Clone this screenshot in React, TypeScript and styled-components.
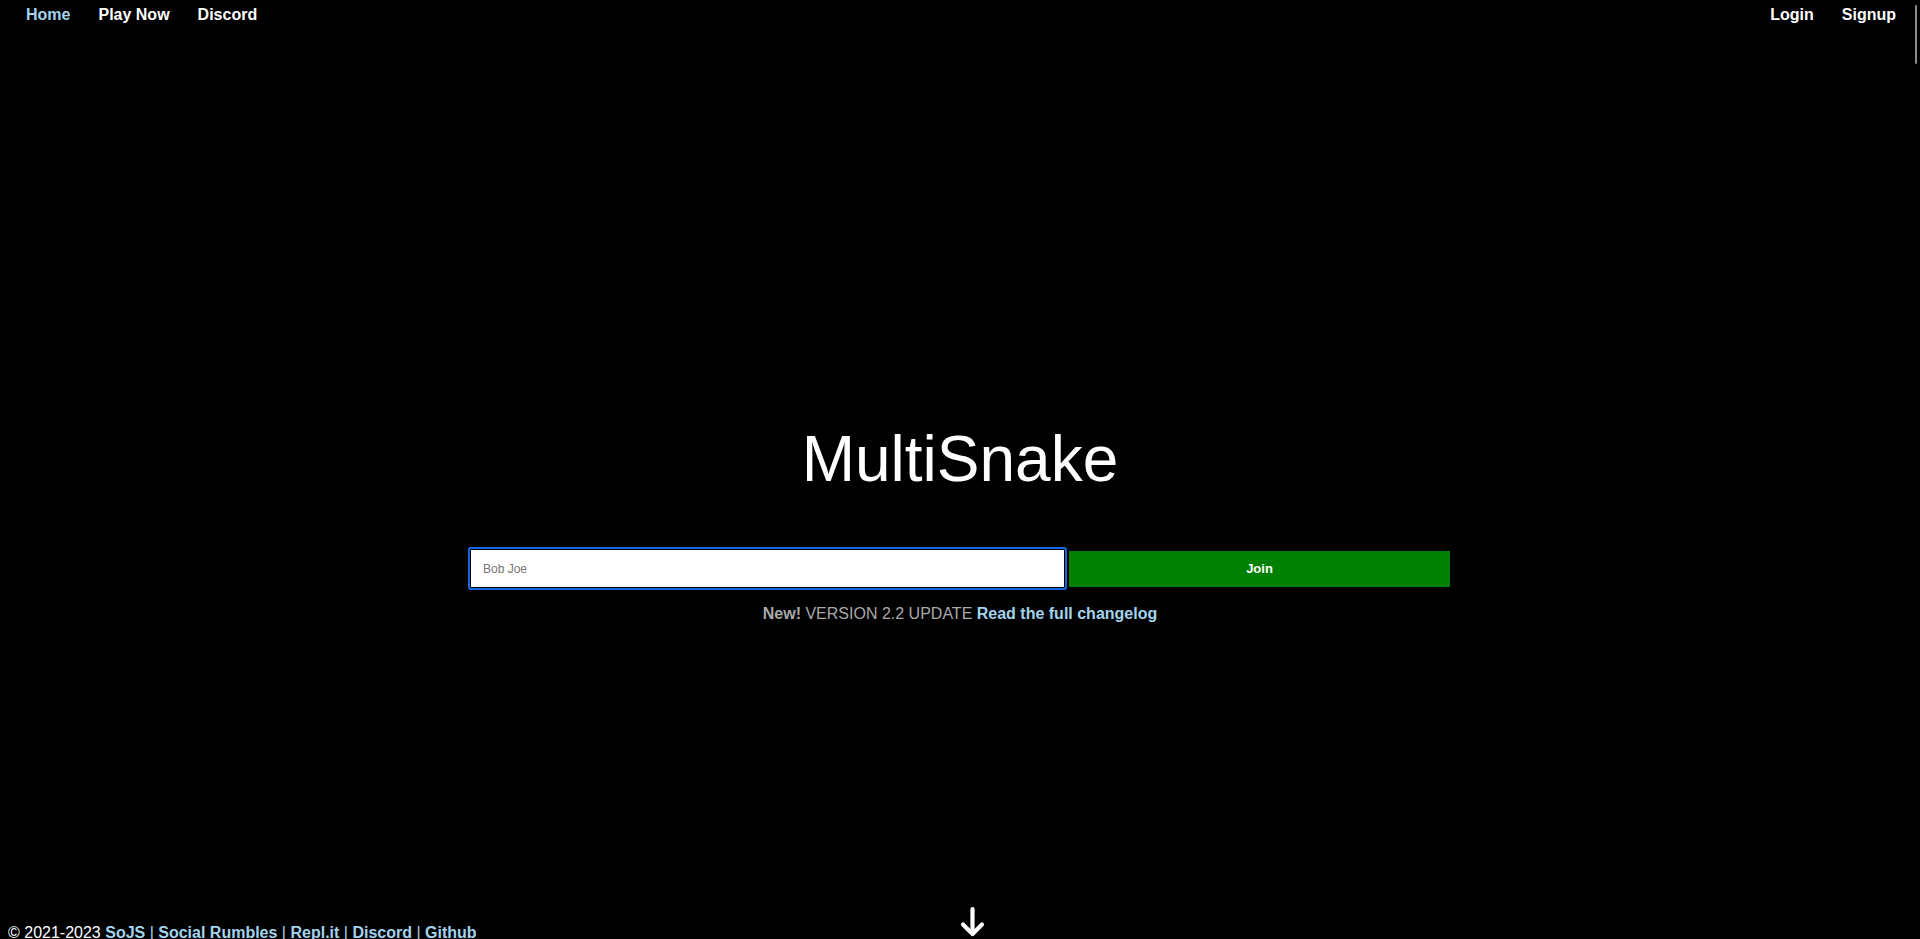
import React from "react";
import styled, { createGlobalStyle } from "styled-components";

const GlobalStyle = createGlobalStyle`
  html, body {
    margin: 0;
    padding: 0;
    background: #000;
    overflow: hidden;
  }
  body {
    font-family: "Liberation Sans", Arial, sans-serif;
    color: #fff;
  }
  * { box-sizing: border-box; }
`;

const Page = styled.div`
  position: relative;
  height: 939px;
  display: flex;
  flex-direction: column;
  background: #000;
`;

const Nav = styled.nav`
  display: flex;
  justify-content: space-between;
  padding: 0 10px 0 12px;
`;

const NavGroup = styled.div`
  display: flex;
`;

const NavLink = styled.a<{ $active?: boolean }>`
  display: block;
  padding: 6px 14px 4px;
  font-size: 16px;
  font-weight: 700;
  line-height: normal;
  text-decoration: none;
  color: ${(p) => (p.$active ? "#a3d4ee" : "#ffffff")};
  cursor: pointer;
`;

const Hero = styled.main`
  display: flex;
  flex-direction: column;
  align-items: center;
  padding-top: 394px;
`;

const Title = styled.h1`
  margin: 0;
  font-size: 64px;
  font-weight: 400;
  line-height: normal;
  color: #fff;
`;

const JoinRow = styled.form`
  display: flex;
  align-items: center;
  gap: 4px;
  margin-top: 53px;
`;

const NameInput = styled.input`
  width: 595px;
  height: 39px;
  padding: 0 12px;
  border: 1px solid #000;
  border-radius: 1px;
  box-shadow: 0 0 0 2px #1566dc;
  background: #fff;
  font-family: "Liberation Sans", Arial, sans-serif;
  font-size: 12px;
  color: #222;
  outline: none;
  &::placeholder {
    color: #767676;
  }
`;

const JoinButton = styled.button`
  width: 381px;
  height: 36px;
  border: none;
  background: #008000;
  color: #fff;
  font-family: "Liberation Sans", Arial, sans-serif;
  font-size: 13px;
  font-weight: 700;
  cursor: pointer;
`;

const Notice = styled.p`
  margin: 17px 0 0;
  font-size: 16px;
  line-height: normal;
  color: #a9a9a9;
`;

const Strong = styled.b<{ $tone?: "grey" | "blue" }>`
  font-weight: 700;
  color: ${(p) => (p.$tone === "blue" ? "#a3d4ee" : "#a9a9a9")};
`;

const Footer = styled.footer`
  margin-top: auto;
  margin-bottom: -3px;
  padding-left: 8px;
  font-size: 16px;
  line-height: normal;
  color: #fff;
  white-space: nowrap;
`;

const FooterLink = styled.a`
  font-weight: 700;
  color: #a3d4ee;
  text-decoration: none;
`;

const Sep = styled.span`
  color: #a3d4ee;
`;

const ScrollArrow = styled.div`
  position: absolute;
  left: 50%;
  top: 905px;
  width: 25px;
  height: 32px;
`;

const ScrollThumb = styled.div`
  position: fixed;
  top: 5px;
  right: 3px;
  width: 2px;
  height: 59px;
  border-radius: 1px;
  background: #8c8c8c;
`;

const footerLinks = ["SoJS", "Social Rumbles", "Repl.it", "Discord", "Github"];

export default function App() {
  return (
    <>
      <GlobalStyle />
      <Page>
        <Nav>
          <NavGroup>
            <NavLink $active>Home</NavLink>
            <NavLink>Play Now</NavLink>
            <NavLink>Discord</NavLink>
          </NavGroup>
          <NavGroup>
            <NavLink>Login</NavLink>
            <NavLink>Signup</NavLink>
          </NavGroup>
        </Nav>
        <Hero>
          <Title>MultiSnake</Title>
          <JoinRow onSubmit={(e) => e.preventDefault()}>
            <NameInput placeholder="Bob Joe" />
            <JoinButton type="submit">Join</JoinButton>
          </JoinRow>
          <Notice>
            <Strong>New!</Strong> VERSION 2.2 UPDATE{" "}
            <Strong $tone="blue">Read the full changelog</Strong>
          </Notice>
        </Hero>
        <Footer>
          © 2021-2023{" "}
          {footerLinks.map((l, i) => (
            <React.Fragment key={l}>
              {i > 0 && <Sep> | </Sep>}
              <FooterLink>{l}</FooterLink>
            </React.Fragment>
          ))}
        </Footer>
        <ScrollArrow>
          <svg width="25" height="32" viewBox="0 0 25 32" fill="none">
            <path
              d="M12.5 4 V28.5"
              stroke="#fff"
              strokeWidth="4.2"
              strokeLinecap="round"
            />
            <path
              d="M3 19.5 L12.5 29 L22 19.5"
              stroke="#fff"
              strokeWidth="4.2"
              strokeLinecap="round"
              strokeLinejoin="round"
            />
          </svg>
        </ScrollArrow>
        <ScrollThumb />
      </Page>
    </>
  );
}
